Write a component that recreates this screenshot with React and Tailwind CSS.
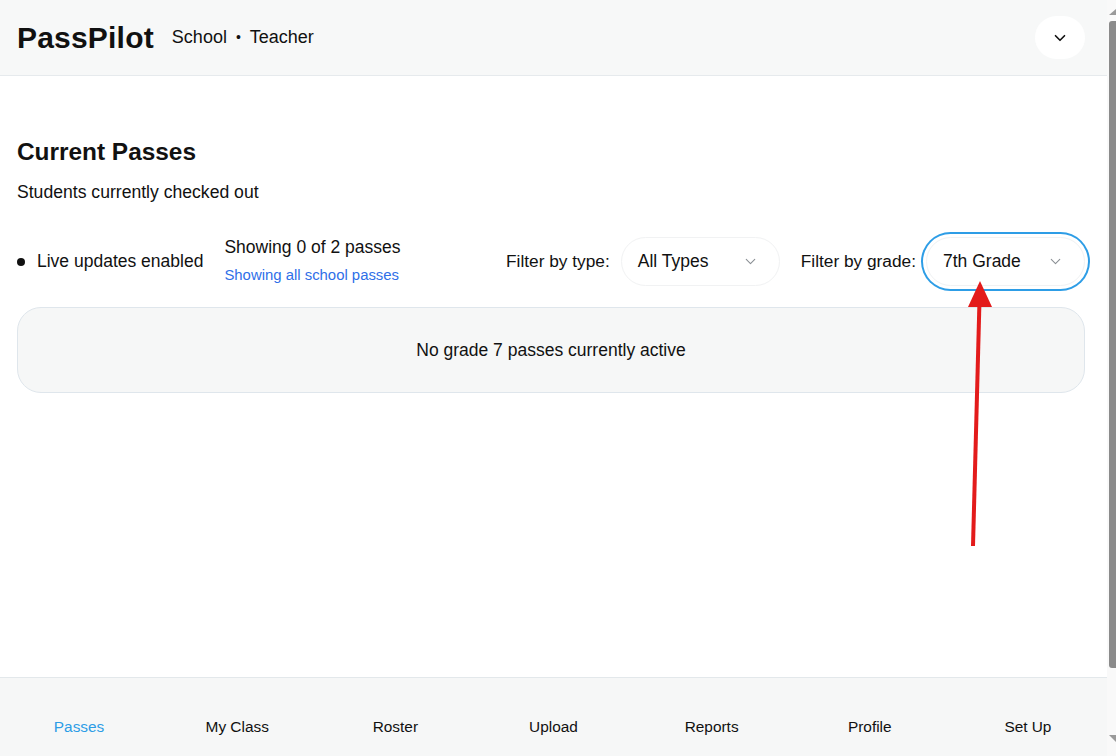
import { ChevronDown } from "lucide-react";

const tabs = ["Passes", "My Class", "Roster", "Upload", "Reports", "Profile", "Set Up"];

function Select({ value, focused }) {
  return (
    <div
      className={
        "flex items-center justify-between w-[159px] h-[49px] pl-4 pr-5 rounded-full bg-white border border-[#f1f2f3] text-[17.5px] text-[#111] " +
        (focused ? "ring-2 ring-[#2d9de6] ring-offset-[3px] ring-offset-white" : "")
      }
    >
      <span>{value}</span>
      <ChevronDown size={17} strokeWidth={1.5} className="text-[#8a8f94]" />
    </div>
  );
}

export default function App() {
  return (
    <div className="relative flex h-screen w-full overflow-hidden bg-white text-[#111] font-['Liberation_Sans',Arial,sans-serif]">
      <div className="flex-1 min-w-0 flex flex-col">
        {/* header */}
        <header className="flex items-center justify-between h-[76px] shrink-0 pl-[17px] pr-[22px] bg-[#f7f8f8] border-b border-[#e6eaed]">
          <div className="flex items-center gap-[18px]">
            <h1 className="text-[30px] font-bold tracking-[0.2px]">PassPilot</h1>
            <div className="flex items-center gap-[9px] text-[18px]">
              <span>School</span>
              <span className="text-[14px]">•</span>
              <span>Teacher</span>
            </div>
          </div>
          <button className="flex items-center justify-center w-[50px] h-[43px] rounded-full bg-white">
            <ChevronDown size={18} strokeWidth={2.2} className="text-[#111]" />
          </button>
        </header>

        {/* main */}
        <main className="flex-1 pl-[17px] pr-[22px] pt-[60px]">
          <h2 className="text-[24.4px] leading-8 font-bold">Current Passes</h2>
          <p className="mt-3 text-[17.6px] leading-6">Students currently checked out</p>

          <div className="flex items-center justify-between mt-[33px]">
            <div className="flex items-center">
              <div className="flex items-center gap-3">
                <span className="w-2 h-2 rounded-full bg-[#111]" />
                <span className="text-[17.5px]">Live updates enabled</span>
              </div>
              <div className="ml-[21px] flex flex-col">
                <span className="text-[17.5px] leading-6 -mt-[3px]">Showing 0 of 2 passes</span>
                <span className="text-[14.9px] leading-5 mt-[6px] text-[#2f6fe8]">Showing all school passes</span>
              </div>
            </div>

            <div className="flex items-center">
              <span className="text-[17.3px] mr-[11px]">Filter by type:</span>
              <Select value="All Types" />
              <span className="text-[17.3px] ml-[21px] mr-[10px]">Filter by grade:</span>
              <Select value="7th Grade" focused />
            </div>
          </div>

          <div className="mt-[21px] h-[86px] flex items-center justify-center rounded-[24px] bg-[#f6f7f7] border border-[#dfe6ec] text-[17.5px]">
            No grade 7 passes currently active
          </div>
        </main>

        {/* bottom nav */}
        <nav className="h-[79px] shrink-0 bg-[#f6f7f7] border-t border-[#e3e8eb] grid grid-cols-7 items-start pt-[39px]">
          {tabs.map((t) => (
            <button
              key={t}
              className={"h-5 text-[15.4px] leading-5 text-center " + (t === "Passes" ? "text-[#2d9de6]" : "text-[#111]")}
            >
              {t}
            </button>
          ))}
        </nav>
      </div>

      {/* scrollbar */}
      <div className="w-[9px] shrink-0 bg-[#f9f9f9] flex flex-col items-end pt-[9px]">
        <svg width="7" height="6" viewBox="0 0 7 6">
          <polygon points="7,0 7,6 0,6" fill="#9a9a9a" />
        </svg>
        <div className="mt-[6px] w-[7px] h-[647px] rounded-l-[3px] bg-[#8b8b8b]" />
        <div className="flex-1" />
        <svg className="mb-[14px]" width="7" height="7" viewBox="0 0 7 7">
          <polygon points="0,0 7,0 7,7" fill="#9a9a9a" />
        </svg>
      </div>

      {/* annotation arrow */}
      <svg className="absolute left-0 top-0 pointer-events-none" width="1116" height="600">
        <line x1="973" y1="546" x2="979.5" y2="300" stroke="#e31b1b" strokeWidth="4" />
        <polygon points="980,281 968,307 992,307" fill="#e31b1b" />
      </svg>
    </div>
  );
}
